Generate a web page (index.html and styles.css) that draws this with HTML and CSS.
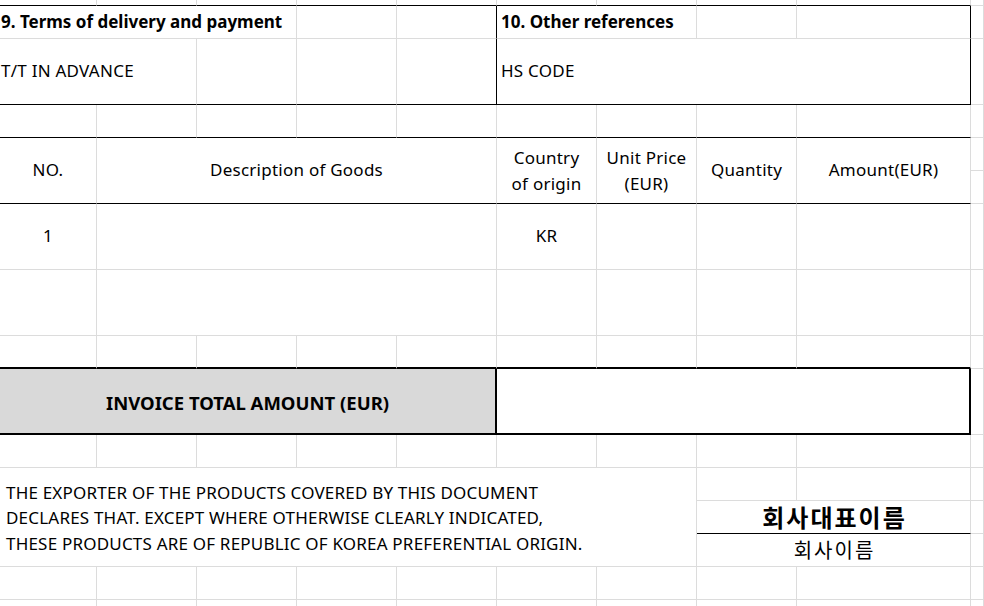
FILE: index.html
```html
<!DOCTYPE html>
<html lang="ko">
<head>
<meta charset="utf-8">
<title>Commercial Invoice</title>
<link rel="stylesheet" href="styles.css">
</head>
<body>
<div class="sheet">
  <!-- row 0 -->
  <div class="c bb"></div><div class="c bb"></div><div class="c bb"></div><div class="c bb"></div><div class="c bb"></div>
  <div class="c bb"></div><div class="c bb"></div><div class="c bb"></div><div class="c bb"></div><div class="c"></div>
  <!-- row 1 -->
  <div class="c s3 bold pl1">9. Terms of delivery and payment</div><div class="c"></div><div class="c br"></div>
  <div class="c s2 bold pl4">10. Other references</div><div class="c"></div><div class="c br"></div><div class="c"></div>
  <!-- row 2 -->
  <div class="c s2 bb pl1">T/T IN ADVANCE</div><div class="c bb"></div><div class="c bb"></div><div class="c bb br"></div>
  <div class="c s4 bb br pl4">HS CODE</div><div class="c"></div>
  <!-- row 3 -->
  <div class="c bb"></div><div class="c bb"></div><div class="c bb"></div><div class="c bb"></div><div class="c bb"></div>
  <div class="c bb"></div><div class="c bb"></div><div class="c bb"></div><div class="c bb"></div><div class="c"></div>
  <!-- rows 4-5 header -->
  <div class="c r2 bb center">NO.</div>
  <div class="c s4 r2 bb center">Description of Goods</div>
  <div class="c r2 bb center two">Country<br>of origin</div>
  <div class="c r2 bb center two">Unit Price<br>(EUR)</div>
  <div class="c r2 bb center">Quantity</div>
  <div class="c r2 bb center">Amount(EUR)</div>
  <div class="c"></div>
  <div class="c"></div>
  <!-- row 6 -->
  <div class="c center">1</div><div class="c s4"></div><div class="c center">KR</div>
  <div class="c"></div><div class="c"></div><div class="c"></div><div class="c"></div>
  <!-- row 7 -->
  <div class="c"></div><div class="c s4"></div><div class="c"></div>
  <div class="c"></div><div class="c"></div><div class="c"></div><div class="c"></div>
  <!-- row 8 -->
  <div class="c bb2"></div><div class="c bb2"></div><div class="c bb2"></div><div class="c bb2"></div><div class="c bb2"></div>
  <div class="c bb2"></div><div class="c bb2"></div><div class="c bb2"></div><div class="c bb2"></div><div class="c"></div>
  <!-- row 9 total -->
  <div class="c s5 bb2 br2 shade center bold total">INVOICE TOTAL AMOUNT (EUR)</div>
  <div class="c s4 bb2 br2"></div>
  <div class="c"></div>
  <!-- row 10 -->
  <div class="c"></div><div class="c"></div><div class="c"></div><div class="c"></div><div class="c"></div>
  <div class="c"></div><div class="c"></div><div class="c"></div><div class="c"></div><div class="c"></div>
  <!-- rows 11-13 -->
  <div class="c s7 r3 decl">THE EXPORTER OF THE PRODUCTS COVERED BY THIS DOCUMENT<br>DECLARES THAT. EXCEPT WHERE OTHERWISE CLEARLY INDICATED,<br>THESE PRODUCTS ARE OF REPUBLIC OF KOREA PREFERENTIAL ORIGIN.</div>
  <div class="c"></div><div class="c"></div><div class="c"></div>
  <div class="c s2 bb center ko ko-rep">회사대표이름</div><div class="c"></div>
  <div class="c s2 center ko ko-name">회사이름</div><div class="c"></div>
  <!-- row 14 -->
  <div class="c"></div><div class="c"></div><div class="c"></div><div class="c"></div><div class="c"></div>
  <div class="c"></div><div class="c"></div><div class="c"></div><div class="c"></div><div class="c"></div>
  <!-- row 15 -->
  <div class="c"></div><div class="c"></div><div class="c"></div><div class="c"></div><div class="c"></div>
  <div class="c"></div><div class="c"></div><div class="c"></div><div class="c"></div><div class="c"></div>
</div>
</body>
</html>
```
FILE: styles.css
```css
* { box-sizing: border-box; }
html, body {
  margin: 0;
  padding: 0;
  background: #fff;
  overflow: hidden;
}
body {
  width: 984px;
  height: 606px;
  font-family: "Noto Sans", "Open Sans", "Noto Sans CJK KR", sans-serif;
  font-size: 17px;
  color: #000;
}
.sheet {
  display: grid;
  grid-template-columns: 97px repeat(7, 100px) 174px 13px;
  grid-template-rows: 6px 33px 66px 33px 33px 33px 66px 66px 33px 66px 33px 33px 33px 33px 33px 7px;
}
.c {
  border-right: 1px solid #dcdcdc;
  border-bottom: 1px solid #dcdcdc;
  display: flex;
  align-items: center;
  white-space: nowrap;
  overflow: hidden;
  background: #fff;
  line-height: 1.2;
  letter-spacing: 0.25px;
}
.s2 { grid-column: span 2; }
.s3 { grid-column: span 3; }
.s4 { grid-column: span 4; }
.s5 { grid-column: span 5; }
.s7 { grid-column: span 7; }
.r2 { grid-row: span 2; }
.r3 { grid-row: span 3; }
.bb { border-bottom-color: #000; }
.bb2 { border-bottom: 2px solid #000; }
.br { border-right-color: #000; }
.br2 { border-right: 2px solid #000; }
.bold { font-weight: 700; letter-spacing: 0; }
.center { justify-content: center; text-align: center; }
.pl1 { padding-left: 1px; }
.pl4 { padding-left: 4px; }
.two { line-height: 26px; }
.shade { background: #d9d9d9; }
.total {
  font-size: 18.5px;
  padding-top: 4px;
}
.decl {
  padding-left: 6px;
  line-height: 25.5px;
  padding-top: 2px;
  letter-spacing: 0.2px;
}
.ko {
  font-family: "Noto Sans CJK KR", sans-serif;
  line-height: 1;
  overflow: visible;
  letter-spacing: 2px;
  padding-left: 2px;
}
.ko-rep {
  font-size: 24px;
  font-weight: 700;
}
.ko-name {
  font-size: 20px;
}
```
